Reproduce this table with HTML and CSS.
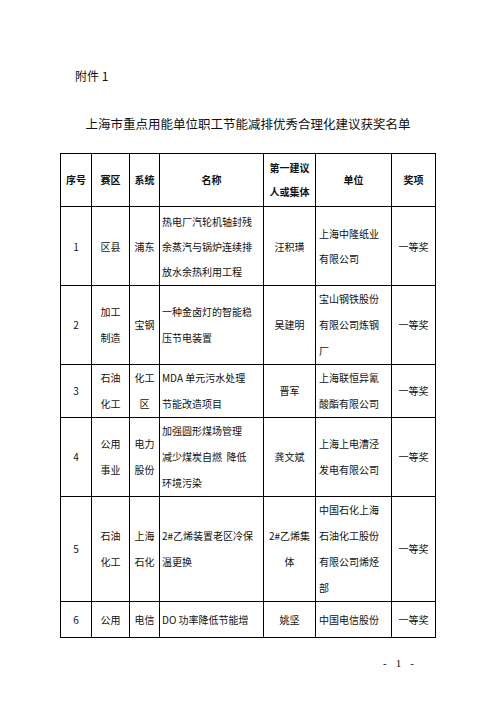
FILE: index.html
```html
<!DOCTYPE html>
<html lang="zh-CN">
<head>
<meta charset="utf-8">
<title>附件1</title>
<link rel="stylesheet" href="styles.css">
</head>
<body>
<div class="page">
  <div class="attach">附件 1</div>
  <div class="title">上海市重点用能单位职工节能减排优秀合理化建议获奖名单</div>
  <table class="list">
    <colgroup>
      <col class="c-no">
      <col class="c-area">
      <col class="c-sys">
      <col class="c-name">
      <col class="c-person">
      <col class="c-unit">
      <col class="c-prize">
    </colgroup>
    <tr class="r-head">
      <th>序号</th>
      <th>赛区</th>
      <th>系统</th>
      <th>名称</th>
      <th class="two">第一建议<br>人或集体</th>
      <th>单位</th>
      <th>奖项</th>
    </tr>
    <tr class="r1">
      <td>1</td>
      <td>区县</td>
      <td>浦东</td>
      <td class="left name">热电厂汽轮机轴封残<br>余蒸汽与锅炉连续排<br>放水余热利用工程</td>
      <td>汪积璜</td>
      <td class="left unit">上海中隆纸业<br>有限公司</td>
      <td>一等奖</td>
    </tr>
    <tr class="r2">
      <td>2</td>
      <td>加工<br>制造</td>
      <td>宝钢</td>
      <td class="left name">一种金卤灯的智能稳<br>压节电装置</td>
      <td>吴建明</td>
      <td class="left unit">宝山钢铁股份<br>有限公司炼钢<br>厂</td>
      <td>一等奖</td>
    </tr>
    <tr class="r3">
      <td>3</td>
      <td>石油<br>化工</td>
      <td>化工<br>区</td>
      <td class="left name">MDA 单元污水处理<br>节能改造项目</td>
      <td>晋军</td>
      <td class="left unit">上海联恒异氰<br>酸酯有限公司</td>
      <td>一等奖</td>
    </tr>
    <tr class="r4">
      <td>4</td>
      <td>公用<br>事业</td>
      <td>电力<br>股份</td>
      <td class="left name">加强圆形煤场管理<br>减少煤炭自燃&nbsp;&nbsp;降低<br>环境污染</td>
      <td>龚文斌</td>
      <td class="left unit">上海上电漕泾<br>发电有限公司</td>
      <td>一等奖</td>
    </tr>
    <tr class="r5">
      <td>5</td>
      <td>石油<br>化工</td>
      <td>上海<br>石化</td>
      <td class="left name">2#乙烯装置老区冷保<br>温更换</td>
      <td>2#乙烯集<br>体</td>
      <td class="left unit">中国石化上海<br>石油化工股份<br>有限公司烯烃<br>部</td>
      <td>一等奖</td>
    </tr>
    <tr class="r6">
      <td>6</td>
      <td>公用</td>
      <td>电信</td>
      <td class="left name">DO 功率降低节能增</td>
      <td>姚坚</td>
      <td class="left unit">中国电信股份</td>
      <td>一等奖</td>
    </tr>
  </table>
  <div class="pagenum"><span>-</span><span>1</span><span>-</span></div>
</div>
</body>
</html>
```

FILE: styles.css
```css
html, body {
  margin: 0;
  padding: 0;
  background: #ffffff;
}

body {
  font-family: "Noto Sans CJK SC", "Noto Sans", sans-serif;
  color: #111111;
}

.page {
  width: 496px;
  height: 702px;
  padding-top: 68px;
  box-sizing: border-box;
}

.attach {
  margin-left: 75px;
  font-size: 12px;
  line-height: 16px;
}

.title {
  margin-top: 32px;
  text-align: center;
  font-size: 12.5px;
  line-height: 16px;
}

.list {
  margin-top: 21px;
  margin-left: 60px;
  width: 376px;
  border-collapse: collapse;
  table-layout: fixed;
  font-size: 10px;
}

.c-no { width: 31px; }
.c-area { width: 38px; }
.c-sys { width: 30px; }
.c-name { width: 104px; }
.c-person { width: 52px; }
.c-unit { width: 76px; }
.c-prize { width: 44px; }

.list th,
.list td {
  border: 1px solid #000000;
  padding: 0 1px;
  text-align: center;
  vertical-align: middle;
  line-height: 26px;
  white-space: nowrap;
  overflow: hidden;
}

.list th {
  font-weight: bold;
}

.list th.two {
  line-height: 24.5px;
}

.list td.left {
  text-align: left;
}

.list td.name {
  padding-left: 2px;
}

.list td.unit {
  padding-left: 3px;
}

.r-head { height: 53px; }
.r1 { height: 79px; }
.r1 td { line-height: 25px; }
.r2 { height: 78px; }
.r3 { height: 52px; }
.r4 { height: 78px; }
.r5 { height: 105px; }
.r6 { height: 36px; }

.pagenum {
  margin-top: 17px;
  margin-left: 383px;
  display: flex;
  gap: 9px;
  font-family: "Liberation Serif", serif;
  font-size: 11px;
  line-height: 16px;
}
```
